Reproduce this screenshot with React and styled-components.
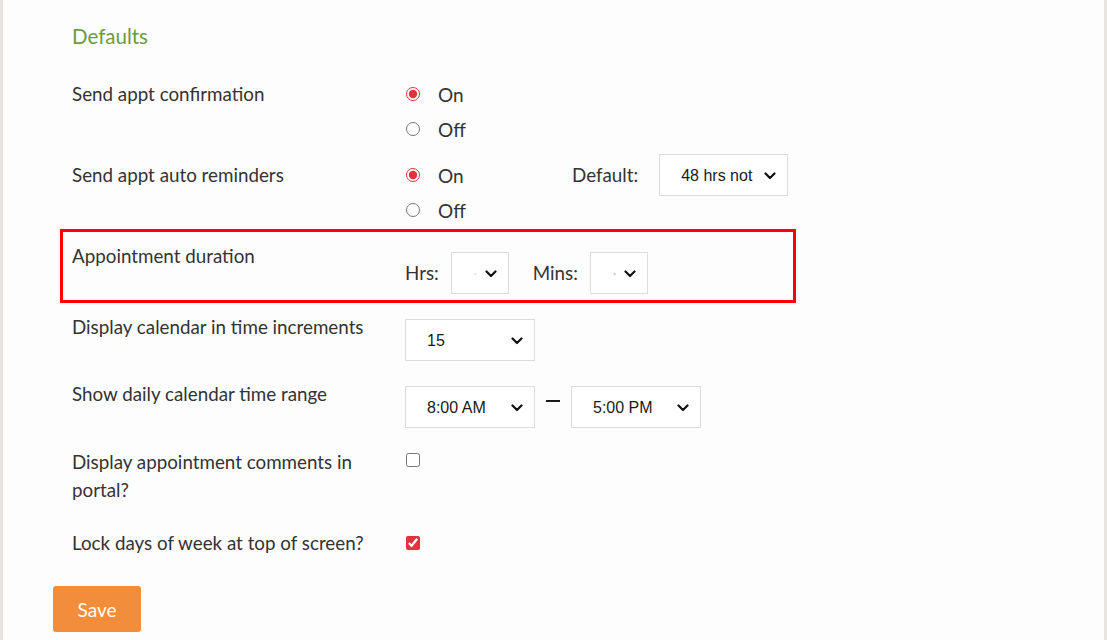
import React from "react";
import styled, { createGlobalStyle } from "styled-components";

const GlobalStyle = createGlobalStyle`
  html, body {
    margin: 0;
    padding: 0;
    background: #fdfdfd;
  }
  body {
    font-family: Lato, "Open Sans", "Liberation Sans", sans-serif;
    color: #333;
  }
`;

const Page = styled.div`
  box-sizing: border-box;
  width: 1107px;
  height: 640px;
  overflow: hidden;
  border-left: 3px solid #e8e4e0;
  border-right: 3px solid #e8e4e0;
  background: #fdfdfd;
  padding: 24px 0 0 50px;
`;

const Heading = styled.h2`
  margin: 0 0 0 19px;
  font-size: 20.5px;
  line-height: 24px;
  font-weight: 400;
  color: #6c9b3f;
`;

const Row = styled.div`
  display: grid;
  grid-template-columns: 333px 1fr;
  align-items: start;
  margin: ${(p) => p.$top}px 0 0 19px;
`;

const Highlight = styled(Row)`
  width: 736px;
  box-sizing: border-box;
  margin-left: 7px;
  border: 3px solid #ff0000;
  padding: 10px 0 6px 9px;
`;

const Label = styled.div`
  font-size: 18.8px;
  line-height: 28px;
  width: ${(p) => p.$width || "auto"};
`;

const Controls = styled.div`
  display: flex;
  align-items: ${(p) => p.$align || "center"};
  gap: ${(p) => p.$gap || 0}px;
  padding-top: ${(p) => p.$pad || 0}px;
`;

const RadioGroup = styled.div`
  display: flex;
  flex-direction: column;
  gap: 11px;
  width: 167px;
  padding-top: 2px;
`;

const RadioLine = styled.label`
  display: flex;
  align-items: center;
  height: 24px;
  font-size: 19px;
`;

const Radio = styled.input.attrs({ type: "radio" })`
  width: 14px;
  height: 14px;
  margin: 0 18px 0 1px;
  accent-color: #e2323e;
`;

const Check = styled.input.attrs({ type: "checkbox" })`
  width: 14px;
  height: 14px;
  margin: ${(p) => p.$top}px 0 0 1px;
  accent-color: #e2323e;
`;

const Inline = styled.div`
  display: flex;
  align-items: center;
  height: 24px;
  margin-top: 2px;
  gap: ${(p) => p.$gap}px;
`;

const Text = styled.span`
  font-size: 18.8px;
  line-height: 24px;
  margin-left: ${(p) => p.$left || 0}px;
`;

const SelectWrap = styled.div`
  position: relative;
  width: ${(p) => p.$w}px;
  height: 42px;
  flex-shrink: 0;
`;

const SelectBox = styled.select`
  appearance: none;
  box-sizing: border-box;
  width: 100%;
  height: 100%;
  border: 1px solid #dcdcdc;
  border-radius: 0;
  background: #fff;
  font-family: "Liberation Sans", Arial, sans-serif;
  font-size: 16px;
  color: ${(p) => p.$color || "#1a1a1a"};
  padding: 0 0 0 21px;
  outline: none;
`;

const Chevron = styled.svg`
  position: absolute;
  right: 12px;
  top: 18px;
  pointer-events: none;
`;

const Dash = styled.span`
  display: block;
  width: 14px;
  height: 2px;
  background: #1a1a1a;
  margin-top: -12px;
`;

const SaveButton = styled.button`
  margin-top: 29px;
  width: 88px;
  height: 46px;
  border: none;
  border-radius: 3px;
  background: #f28d3b;
  color: #fff;
  font-family: inherit;
  font-size: 19px;
  cursor: pointer;
`;

const Select = ({ width, value, color }) => (
  <SelectWrap $w={width}>
    <SelectBox $color={color} defaultValue={value}>
      <option value={value}>{value}</option>
    </SelectBox>
    <Chevron width="12" height="8" viewBox="0 0 12 8">
      <path
        d="M1.5 1.5L6 6l4.5-4.5"
        fill="none"
        stroke="#111"
        strokeWidth="2.2"
        strokeLinecap="round"
        strokeLinejoin="round"
      />
    </Chevron>
  </SelectWrap>
);

const OnOff = ({ name }) => (
  <RadioGroup>
    <RadioLine>
      <Radio defaultChecked name={name} />
      On
    </RadioLine>
    <RadioLine>
      <Radio name={name} />
      Off
    </RadioLine>
  </RadioGroup>
);

export default function App() {
  return (
    <>
      <GlobalStyle />
      <Page>
        <Heading>Defaults</Heading>

        <Row $top={32}>
          <Label>Send appt confirmation</Label>
          <Controls $align="flex-start">
            <OnOff name="confirm" />
          </Controls>
        </Row>

        <Row $top={20}>
          <Label>Send appt auto reminders</Label>
          <Controls $align="flex-start">
            <OnOff name="remind" />
            <Inline $gap={21}>
              <Text>Default:</Text>
              <Select width={129} value="48 hrs not" />
            </Inline>
          </Controls>
        </Row>

        <Highlight $top={7}>
          <Label>Appointment duration</Label>
          <Controls $pad={10} $gap={12}>
            <Text>Hrs:</Text>
            <Select width={58} value="·" color="#d8d8d8" />
            <Text $left={12}>Mins:</Text>
            <Select width={58} value="·" color="#bbb" />
          </Controls>
        </Highlight>

        <Row $top={10}>
          <Label>Display calendar in time increments</Label>
          <Controls $pad={6}>
            <Select width={130} value="15" />
          </Controls>
        </Row>

        <Row $top={19}>
          <Label>Show daily calendar time range</Label>
          <Controls $pad={6} $gap={11}>
            <Select width={130} value="8:00 AM" />
            <Dash />
            <Select width={130} value="5:00 PM" />
          </Controls>
        </Row>

        <Row $top={20}>
          <Label $width="300px">Display appointment comments in portal?</Label>
          <Controls $align="flex-start">
            <Check $top={5} />
          </Controls>
        </Row>

        <Row $top={25}>
          <Label>Lock days of week at top of screen?</Label>
          <Controls $align="flex-start">
            <Check $top={7} defaultChecked />
          </Controls>
        </Row>

        <SaveButton>Save</SaveButton>
      </Page>
    </>
  );
}
